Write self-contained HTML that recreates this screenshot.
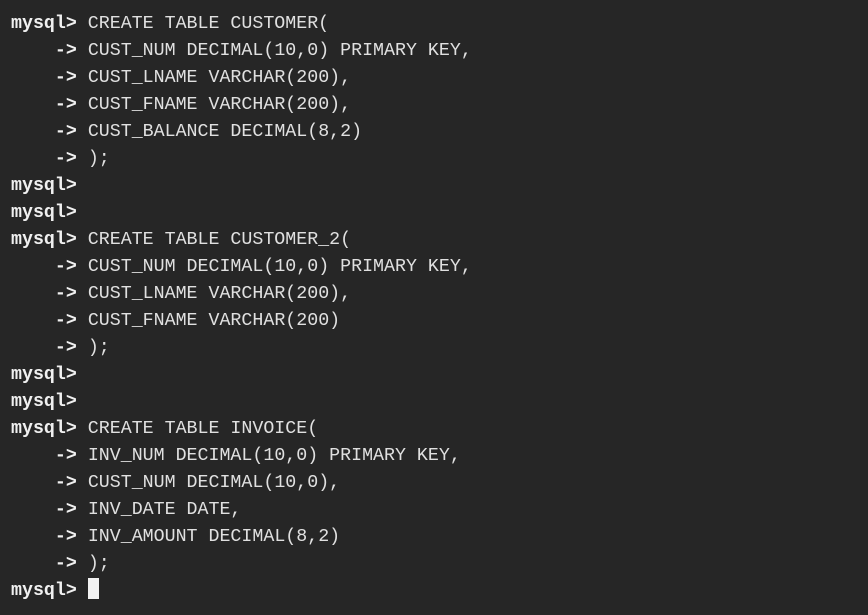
<!DOCTYPE html>
<html><head><style>
html,body{margin:0;padding:0;background:#262626;}
body{width:868px;height:615px;overflow:hidden;}
pre{margin:0;padding:11px 0 0 11px;font-family:"Liberation Mono",monospace;font-size:18.3px;line-height:27px;color:#e0e0e0;}
b{color:#f0f0f0;font-weight:bold;}
.c{display:inline-block;width:11px;height:21px;background:#f2f2f2;vertical-align:-4px;}
</style></head><body><pre><b>mysql&gt;</b> CREATE TABLE CUSTOMER(
    <b>-&gt;</b> CUST_NUM DECIMAL(10,0) PRIMARY KEY,
    <b>-&gt;</b> CUST_LNAME VARCHAR(200),
    <b>-&gt;</b> CUST_FNAME VARCHAR(200),
    <b>-&gt;</b> CUST_BALANCE DECIMAL(8,2)
    <b>-&gt;</b> );
<b>mysql&gt;</b>
<b>mysql&gt;</b>
<b>mysql&gt;</b> CREATE TABLE CUSTOMER_2(
    <b>-&gt;</b> CUST_NUM DECIMAL(10,0) PRIMARY KEY,
    <b>-&gt;</b> CUST_LNAME VARCHAR(200),
    <b>-&gt;</b> CUST_FNAME VARCHAR(200)
    <b>-&gt;</b> );
<b>mysql&gt;</b>
<b>mysql&gt;</b>
<b>mysql&gt;</b> CREATE TABLE INVOICE(
    <b>-&gt;</b> INV_NUM DECIMAL(10,0) PRIMARY KEY,
    <b>-&gt;</b> CUST_NUM DECIMAL(10,0),
    <b>-&gt;</b> INV_DATE DATE,
    <b>-&gt;</b> INV_AMOUNT DECIMAL(8,2)
    <b>-&gt;</b> );
<b>mysql&gt;</b> <span class="c"></span></pre></body></html>
